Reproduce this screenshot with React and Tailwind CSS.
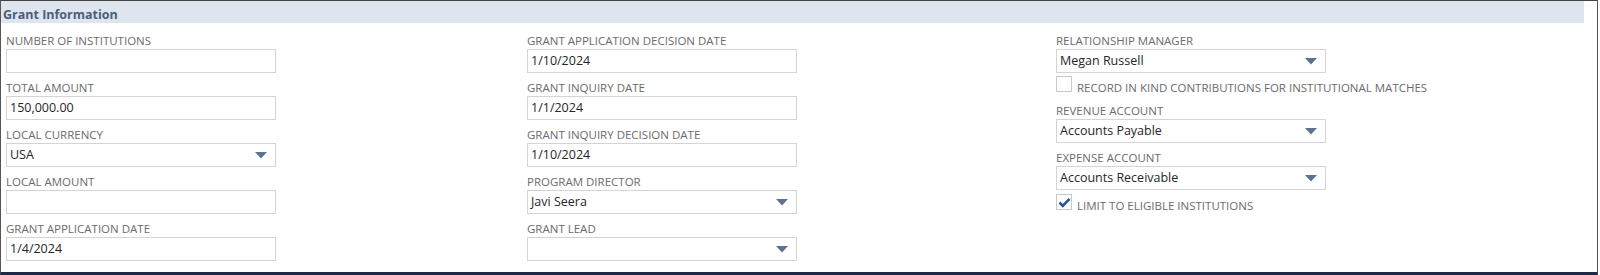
function Caret() {
  return (
    <svg width="12" height="7" viewBox="0 0 12 7" className="shrink-0">
      <polygon points="0,0 12,0 6,6.5" fill="#5d7190" />
    </svg>
  );
}

function Field({ label, value, select }) {
  return (
    <div className="flex flex-col">
      <div className="text-[11.5px] leading-[16px] text-[#6b6b6b] uppercase">{label}</div>
      <div className="w-[270px] h-[24px] border border-[#d4d4d4] bg-white flex items-center justify-between pl-[3px] pr-[8px]">
        <span className="text-[12.5px] text-[#262626] pt-[1px]">{value}</span>
        {select && <Caret />}
      </div>
    </div>
  );
}

function Check({ label, checked }) {
  return (
    <div className="flex items-start gap-[5px]">
      <div className="w-[16px] h-[16px] border border-[#c8c8c8] bg-white flex items-center justify-center">
        {checked && (
          <svg width="13" height="11" viewBox="0 0 13 11">
            <path d="M1.5 5.5 L4.8 8.8 L11.5 1.8" fill="none" stroke="#23549b" strokeWidth="2.6" />
          </svg>
        )}
      </div>
      <div className="text-[11.5px] leading-[16px] text-[#6b6b6b] uppercase mt-[4px]">{label}</div>
    </div>
  );
}

export default function App() {
  return (
    <div
      className="w-[1598px] h-[275px] bg-white border-l border-t border-r border-l-[#555] border-t-[#444] border-r-[#555] border-b-[3px] border-b-[#1e2a45] pr-[13px]"
      style={{ fontFamily: '"Open Sans", "Liberation Sans", sans-serif' }}
    >
      <div className="h-[22px] bg-[#dfe5ee] pl-[2px]">
        <span className="text-[12.5px] leading-[17px] font-bold text-[#4b5e7a]">Grant Information</span>
      </div>
      <div className="flex pt-[10px] pl-[5px]">
        <div className="w-[521px] flex flex-col gap-[7px]">
          <Field label="Number of Institutions" value="" />
          <Field label="Total Amount" value="150,000.00" />
          <Field label="Local Currency" value="USA" select />
          <Field label="Local Amount" value="" />
          <Field label="Grant Application Date" value="1/4/2024" />
        </div>
        <div className="w-[529px] flex flex-col gap-[7px]">
          <Field label="Grant Application Decision Date" value="1/10/2024" />
          <Field label="Grant Inquiry Date" value="1/1/2024" />
          <Field label="Grant Inquiry Decision Date" value="1/10/2024" />
          <Field label="Program Director" value="Javi Seera" select />
          <Field label="Grant Lead" value="" select />
        </div>
        <div className="flex flex-col">
          <Field label="Relationship Manager" value="Megan Russell" select />
          <div className="mt-[3px]">
            <Check label="Record in kind contributions for institutional matches" />
          </div>
          <div className="mt-[7px]">
            <Field label="Revenue Account" value="Accounts Payable" select />
          </div>
          <div className="mt-[7px]">
            <Field label="Expense Account" value="Accounts Receivable" select />
          </div>
          <div className="mt-[4px]">
            <Check label="Limit to eligible institutions" checked />
          </div>
        </div>
      </div>
    </div>
  );
}
